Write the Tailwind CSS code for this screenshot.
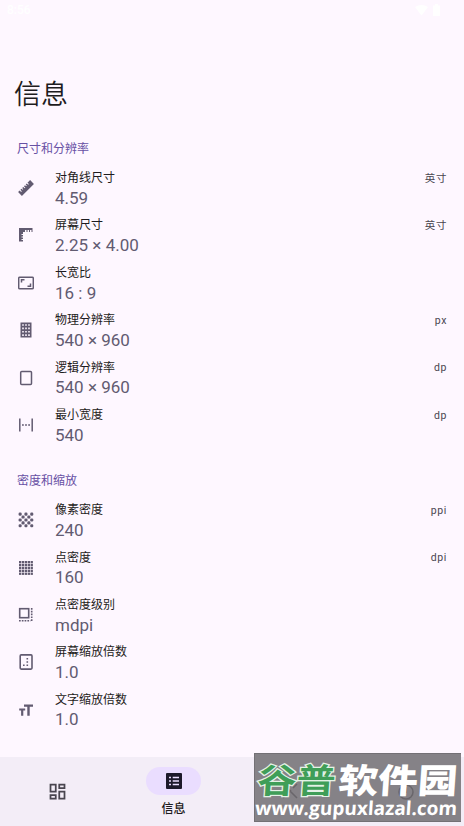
<!DOCTYPE html>
<html lang="zh-CN">
<head>
<meta charset="utf-8">
<title>信息</title>
<script src="https://cdn.jsdelivr.net/npm/@tailwindcss/browser@4"></script>
</head>
<body class="w-[464px] h-[826px] overflow-hidden bg-[#fef7ff] font-[Roboto,'Noto_Sans_CJK_SC',sans-serif] text-[#1d1b20]">
<div class="relative flex flex-col w-[464px] h-[826px]">
  <div class="flex h-5 shrink-0 items-center justify-between pl-[7px] pr-6 text-white">
    <span class="text-[12px] font-medium">8:56</span>
    <div class="flex items-center gap-[5px]">
      <svg class="w-[13px] h-[12px]" viewBox="0 0 13 12" fill="currentColor"><path d="M0 3Q6.500-1 13 3L6.500 11.500Z"/></svg>
      <svg class="w-[7px] h-[12px]" viewBox="0 0 7 12" fill="currentColor"><path d="M0 1.500h2V0h3v1.500h2V12H0Z"/></svg>
    </div>
  </div>
  <h1 class="mt-[55px] h-10 leading-[40px] pl-[14px] text-[27px] font-[350]">信息</h1>

  <h2 class="mt-[24px] h-5 leading-[20px] pl-[17px] text-[12px] text-[#6750a4]">尺寸和分辨率</h2>
  <ul class="mt-[5.800px] text-[#625b71]" id="size"></ul>
  <h2 class="mt-[21.800px] h-5 leading-[20px] pl-[17px] text-[12px] text-[#6750a4]">密度和缩放</h2>
  <ul class="mt-[6px] text-[#625b71]" id="density"></ul>

  <nav class="absolute inset-x-0 bottom-0 flex h-[69px] bg-[#f3edf7]">
    <div class="flex w-[115px] items-center justify-center text-[#49454f]">
      <svg class="w-[21px] h-[21px]" viewBox="0 0 24 24" fill="currentColor"><path d="M19 5v2h-4V5h4M9 5v6H5V5h4m10 8v6h-4v-6h4M9 17v2H5v-2h4M21 3h-8v6h8V3zM11 3H3v10h8V3zm10 8h-8v10h8V11zm-10 4H3v6h8v-6z"/></svg>
    </div>
    <div class="flex w-[117px] flex-col items-center pt-[10px]">
      <div class="flex h-[28px] w-[55px] items-center justify-center rounded-full bg-[#eaddff]">
        <svg class="w-[16px] h-[16px]" viewBox="0 0 16 16"><rect width="16" height="16" rx="1" fill="#1d192b"/><path d="M3 4.500h2M3 8h2M3 11.500h2M6.700 4.500H13M6.700 8H13M6.700 11.500H13" stroke="#eaddff" stroke-width="1.500"/></svg>
      </div>
      <span class="mt-[5px] text-[12px] leading-[18px] font-medium">信息</span>
    </div>
  </nav>

  <svg class="absolute left-[254px] top-[753px] w-[207px] h-[69px]" viewBox="0 0 207 69">
    <rect width="207" height="69" fill="#858287"/>
    <path d="M0 .5H207M.5 0V69M0 68.500H207" stroke="#737075" fill="none"/>
    <g fill="none" stroke="#69666b" stroke-width="1.500"><path d="M29 31l14 14M29 45l8-8M39 35l4-4"/><circle cx="152" cy="39" r="7"/><path d="M152 34v6"/></g>
    <g font-family="'Noto Sans CJK SC',sans-serif" font-size="34" transform="translate(2.500 0) skewX(-4)">
      <text x="3" y="40.500" textLength="78" lengthAdjust="spacingAndGlyphs" font-weight="700" fill="#3f9e58" stroke="#e4f2e6" stroke-width="2.400" paint-order="stroke">谷普</text>
      <text x="84" y="40.500" textLength="119" lengthAdjust="spacingAndGlyphs" font-weight="900" fill="#fff">软件园</text>
    </g>
    <text x="1" y="62" textLength="202" lengthAdjust="spacingAndGlyphs" transform="translate(4 0) skewX(-4)" font-family="'Open Sans',sans-serif" font-weight="700" font-size="19" fill="#fff">www.gupuxlazal.com</text>
  </svg>
</div>
<script>
const stroke = d => `<path fill="none" stroke="currentColor" stroke-width="1.500" d="${d}"/>`;
const dots = (n, p, s, o, test) => {
  let r = '';
  for (let y = 0; y < n; y++) for (let x = 0; x < n; x++) if (test(x, y)) r += `<rect x="${o + x * p}" y="${o + y * p}" width="${s}" height="${s}" rx="${s > 2.5 ? 1.2 : 0}"/>`;
  return r;
};
const icons = {
  ruler: '<g transform="rotate(-45 8 8)"><path d="M-.5 5.300h2.300v2h1v-2h1.500v1.600h1V5.300h1.500v2h1v-2h1.500v1.600h1V5.300h1.500v2h1v-2H16.500v5.400H-.5Z"/></g>',
  corner: '<path d="M1 1h13.500v4h-1V3h-1.500v2h-1V3H9.500v2h-1V3H7v2H5v2H3.500v1H5v1.500H3.500v1H5V12H3.500v1H5v1.500H1Z"/>',
  ratio: '<rect x=".7" y="2.200" width="14.600" height="11.600" rx="1" fill="none" stroke="currentColor" stroke-width="1.500"/>' + stroke('M3.500 7.500V4.800H6.500M12.500 8.500v2.700H9.500'),
  grid: '<path fill-rule="evenodd" d="M2.500 0.500h11v15h-11ZM4.200 2.200v1.600h1.600V2.200ZM7.200 2.200v1.600h1.600V2.200ZM10.200 2.200v1.600h1.600V2.200ZM4.200 5.600v1.600h1.600V5.600ZM7.200 5.600v1.600h1.600V5.600ZM10.200 5.600v1.600h1.600V5.600ZM4.200 9v1.600h1.600V9ZM7.200 9v1.600h1.600V9ZM10.200 9v1.600h1.600V9ZM4.200 12.300v1.600h1.600v-1.600ZM7.200 12.300v1.600h1.600v-1.600ZM10.200 12.300v1.600h1.600v-1.600Z"/>',
  rect: '<rect x="2.700" y="1.400" width="10.800" height="13.200" rx="1" fill="none" stroke="currentColor" stroke-width="1.500"/>',
  width: stroke('M1.800 1.500v13M14.200 1.500v13M4 8h1.800M7.100 8h1.800M10.200 8H12'),
  checker: dots(5, 2.9, 3.1, .6, (x, y) => (x + y) % 2 === 0),
  dense: dots(5, 2.9, 2.3, 1, () => true),
  select: '<rect x="1.700" y="1.700" width="9" height="9" fill="none" stroke="currentColor" stroke-width="1.600"/>' + '<path fill="none" stroke="currentColor" stroke-width="1.600" stroke-dasharray="1.700 1.100" d="M13.700 1v13.500M1 13.700h11.500"/>',
  scale: '<rect x="2.200" y=".9" width="11.800" height="14.200" rx="1" fill="none" stroke="currentColor" stroke-width="1.600"/><path d="M8.500 4h1.600v1.600H8.500ZM8.500 7.200h1.600v1.600H8.500ZM8.500 10.400h1.600V12H8.500ZM5 10.400h1.600V12H5Z"/>',
  text: '<path d="M6 2.500h9v2.200h-3.300v9H9.300v-9H6ZM1.200 6.500h6v2H5.300v5.200H3.100V8.500H1.200Z"/>'
};
const row = ([icon, title, value, unit]) => `
  <li class="flex h-[47.400px] pl-[18px] pr-[17px]">
    <svg class="mt-[15.300px] h-4 w-4 shrink-0" viewBox="0 0 16 16" fill="currentColor">${icons[icon]}</svg>
    <div class="ml-[21px] flex-1 pt-[4.300px]">
      <div class="h-[16.700px] text-[12px] leading-[18px] text-[#1d1b20]">${title}</div>
      <div class="h-6 text-[17px] leading-[24px] tracking-[0px]">${value}</div>
    </div>
    <span class="pt-[4.800px] text-[10.500px] leading-[18px] tracking-[0.600px] text-[#49454f]">${unit}</span>
  </li>`;
document.getElementById('size').innerHTML = [
  ['ruler', '对角线尺寸', '4.59', '英寸'],
  ['corner', '屏幕尺寸', '2.25 × 4.00', '英寸'],
  ['ratio', '长宽比', '16 : 9', ''],
  ['grid', '物理分辨率', '540 × 960', 'px'],
  ['rect', '逻辑分辨率', '540 × 960', 'dp'],
  ['width', '最小宽度', '540', 'dp']
].map(row).join('');
document.getElementById('density').innerHTML = [
  ['checker', '像素密度', '240', 'ppi'],
  ['dense', '点密度', '160', 'dpi'],
  ['select', '点密度级别', 'mdpi', ''],
  ['scale', '屏幕缩放倍数', '1.0', ''],
  ['text', '文字缩放倍数', '1.0', '']
].map(row).join('');
</script>
</body>
</html>
